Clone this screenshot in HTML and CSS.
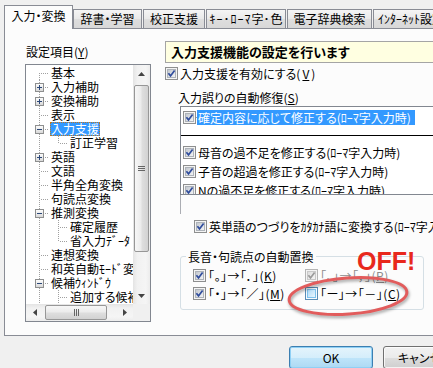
FILE: index.html
```html
<!DOCTYPE html>
<html lang="ja">
<head>
<meta charset="UTF-8">
<meta name="viewport" content="width=device-width, initial-scale=1.0">
<title>入力支援</title>
<link rel="stylesheet" href="styles.css">
</head>
<body>
<svg class="defs" width="0" height="0">
    <defs>
        <linearGradient id="cbFill" x1="0" y1="0" x2="1" y2="1">
            <stop offset="0" stop-color="#c0c5cc"/>
            <stop offset="1" stop-color="#f5f6f7"/>
        </linearGradient>
        <linearGradient id="cbHot" x1="0" y1="0" x2="1" y2="1">
            <stop offset="0" stop-color="#a9d8f6"/>
            <stop offset="1" stop-color="#eef8fe"/>
        </linearGradient>
        <linearGradient id="cbDis" x1="0" y1="0" x2="1" y2="1">
            <stop offset="0" stop-color="#dcdcdc"/>
            <stop offset="1" stop-color="#f6f6f6"/>
        </linearGradient>
        <linearGradient id="expFill" x1="0" y1="0" x2="0" y2="1">
            <stop offset="0" stop-color="#ffffff"/>
            <stop offset="1" stop-color="#d6d6d6"/>
        </linearGradient>
    </defs>
</svg>
<div id="dialog">
    <!-- タブ -->
    <div class="tabs">
        <div class="tab active">入力・変換</div>
        <div class="tab t2">辞書・学習</div>
        <div class="tab t3">校正支援</div>
        <div class="tab t4"><span class="hw">ｷｰ･ﾛｰﾏ</span>字<span class="hw">･</span>色</div>
        <div class="tab t5">電子辞典検索</div>
        <div class="tab t6"><span class="hw">ｲﾝﾀｰﾈｯﾄ</span>設定</div>
    </div>
    <div class="panel">
        <!-- 設定項目ツリー -->
        <div class="leftCol">
            <div class="caption">設定項目(<u>Y</u>)</div>
            <div class="tree">
                <div class="treeBody">
                    <div class="row"><span class="c first"></span><span class="txt">基本</span></div>
                    <div class="row"><span class="c tee"><svg class="exp" viewBox="0 0 9 9"><rect x=".5" y=".5" width="8" height="8" fill="url(#expFill)" stroke="#8e8f8f"/><path d="M2 4.5h5M4.5 2v5" stroke="#2c4878"/></svg></span><span class="txt">入力補助</span></div>
                    <div class="row"><span class="c tee"><svg class="exp" viewBox="0 0 9 9"><rect x=".5" y=".5" width="8" height="8" fill="url(#expFill)" stroke="#8e8f8f"/><path d="M2 4.5h5M4.5 2v5" stroke="#2c4878"/></svg></span><span class="txt">変換補助</span></div>
                    <div class="row"><span class="c tee"></span><span class="txt">表示</span></div>
                    <div class="row"><span class="c tee"><svg class="exp" viewBox="0 0 9 9"><rect x=".5" y=".5" width="8" height="8" fill="url(#expFill)" stroke="#8e8f8f"/><path d="M2 4.5h5" stroke="#2c4878"/></svg></span><span class="txt sel">入力支援</span></div>
                    <div class="row"><span class="c pipe"></span><span class="c elbow"></span><span class="txt">訂正学習</span></div>
                    <div class="row"><span class="c tee"><svg class="exp" viewBox="0 0 9 9"><rect x=".5" y=".5" width="8" height="8" fill="url(#expFill)" stroke="#8e8f8f"/><path d="M2 4.5h5M4.5 2v5" stroke="#2c4878"/></svg></span><span class="txt">英語</span></div>
                    <div class="row"><span class="c tee"></span><span class="txt">文語</span></div>
                    <div class="row"><span class="c tee"></span><span class="txt">半角全角変換</span></div>
                    <div class="row"><span class="c tee"></span><span class="txt">句読点変換</span></div>
                    <div class="row"><span class="c tee"><svg class="exp" viewBox="0 0 9 9"><rect x=".5" y=".5" width="8" height="8" fill="url(#expFill)" stroke="#8e8f8f"/><path d="M2 4.5h5" stroke="#2c4878"/></svg></span><span class="txt">推測変換</span></div>
                    <div class="row"><span class="c pipe"></span><span class="c tee"></span><span class="txt">確定履歴</span></div>
                    <div class="row"><span class="c pipe"></span><span class="c elbow"></span><span class="txt">省入力<span class="hw">ﾃﾞｰﾀ</span></span></div>
                    <div class="row"><span class="c tee"></span><span class="txt">連想変換</span></div>
                    <div class="row"><span class="c tee"></span><span class="txt">和英自動<span class="hw">ﾓｰﾄﾞ</span>変換</span></div>
                    <div class="row"><span class="c tee"><svg class="exp" viewBox="0 0 9 9"><rect x=".5" y=".5" width="8" height="8" fill="url(#expFill)" stroke="#8e8f8f"/><path d="M2 4.5h5" stroke="#2c4878"/></svg></span><span class="txt">候補<span class="hw">ｳｨﾝﾄﾞｳ</span></span></div>
                    <div class="row"><span class="c pipe"></span><span class="c tee"></span><span class="txt">追加する候補</span></div>
                </div>
                <div class="vscroll">
                    <div class="sbtn"><svg width="7" height="4" viewBox="0 0 7 4"><path d="M3.5 0L7 4H0z" fill="#444"/></svg></div>
                    <div class="vthumb"><svg width="7" height="5" viewBox="0 0 7 5"><path d="M0 .5h7M0 2.5h7M0 4.5h7" stroke="#666"/></svg></div>
                    <div class="spacer"></div>
                    <div class="sbtn"><svg width="7" height="4" viewBox="0 0 7 4"><path d="M0 0h7L3.5 4z" fill="#444"/></svg></div>
                </div>
                <div class="hscroll">
                    <div class="sbtn"><svg width="4" height="7" viewBox="0 0 4 7"><path d="M0 3.5L4 0v7z" fill="#444"/></svg></div>
                    <div class="hthumb"><svg width="5" height="7" viewBox="0 0 5 7"><path d="M.5 0v7M2.5 0v7M4.5 0v7" stroke="#666"/></svg></div>
                    <div class="spacer"></div>
                    <div class="sbtn"><svg width="4" height="7" viewBox="0 0 4 7"><path d="M0 0l4 3.5L0 7z" fill="#444"/></svg></div>
                </div>
                <div class="corner"></div>
            </div>
        </div>
        <!-- 入力支援の設定 -->
        <div class="rightCol">
            <div class="header">入力支援機能の設定を行います</div>
            <label class="chk main"><svg class="cb" viewBox="0 0 13 13"><rect x=".5" y=".5" width="12" height="12" fill="#f4f4f4" stroke="#8e8f8f"/><rect x="2.5" y="2.5" width="8" height="8" fill="url(#cbFill)" stroke="#aeb3b9"/><path d="M3.4 6.3l2.1 2.6 4.1-5.5" fill="none" stroke="#2f4c9c" stroke-width="1.7"/></svg>入力支援を有効にする(<u>V</u>)</label>
            <div class="sub">入力誤りの自動修復(<u>S</u>)</div>
            <div class="list">
                <div class="item first"><svg class="cb" viewBox="0 0 13 13"><rect x=".5" y=".5" width="12" height="12" fill="#f4f4f4" stroke="#8e8f8f"/><rect x="2.5" y="2.5" width="8" height="8" fill="url(#cbFill)" stroke="#aeb3b9"/><path d="M3.4 6.3l2.1 2.6 4.1-5.5" fill="none" stroke="#2f4c9c" stroke-width="1.7"/></svg><span class="hl">確定内容に応じて修正する(ﾛｰﾏ字入力時)</span></div>
                <div class="sep"></div>
                <div class="item"><svg class="cb" viewBox="0 0 13 13"><rect x=".5" y=".5" width="12" height="12" fill="#f4f4f4" stroke="#8e8f8f"/><rect x="2.5" y="2.5" width="8" height="8" fill="url(#cbFill)" stroke="#aeb3b9"/><path d="M3.4 6.3l2.1 2.6 4.1-5.5" fill="none" stroke="#2f4c9c" stroke-width="1.7"/></svg><span class="itxt">母音の過不足を修正する(ﾛｰﾏ字入力時)</span></div>
                <div class="item"><svg class="cb" viewBox="0 0 13 13"><rect x=".5" y=".5" width="12" height="12" fill="#f4f4f4" stroke="#8e8f8f"/><rect x="2.5" y="2.5" width="8" height="8" fill="url(#cbFill)" stroke="#aeb3b9"/><path d="M3.4 6.3l2.1 2.6 4.1-5.5" fill="none" stroke="#2f4c9c" stroke-width="1.7"/></svg><span class="itxt">子音の超過を修正する(ﾛｰﾏ字入力時)</span></div>
                <div class="item"><svg class="cb" viewBox="0 0 13 13"><rect x=".5" y=".5" width="12" height="12" fill="#f4f4f4" stroke="#8e8f8f"/><rect x="2.5" y="2.5" width="8" height="8" fill="url(#cbFill)" stroke="#aeb3b9"/><path d="M3.4 6.3l2.1 2.6 4.1-5.5" fill="none" stroke="#2f4c9c" stroke-width="1.7"/></svg><span class="itxt">Nの過不足を修正する(ﾛｰﾏ字入力時)</span></div>
            </div>
            <div class="desc"></div>
            <label class="chk eng"><svg class="cb" viewBox="0 0 13 13"><rect x=".5" y=".5" width="12" height="12" fill="#f4f4f4" stroke="#8e8f8f"/><rect x="2.5" y="2.5" width="8" height="8" fill="url(#cbFill)" stroke="#aeb3b9"/><path d="M3.4 6.3l2.1 2.6 4.1-5.5" fill="none" stroke="#2f4c9c" stroke-width="1.7"/></svg>英単語のつづりをｶﾀｶﾅ語に変換する(ﾛｰﾏ字入力時)</label>
            <div class="group">
                <div class="legend">長音・句読点の自動置換</div>
                <div class="grid">
                    <label class="chk"><svg class="cb" viewBox="0 0 13 13"><rect x=".5" y=".5" width="12" height="12" fill="#f4f4f4" stroke="#8e8f8f"/><rect x="2.5" y="2.5" width="8" height="8" fill="url(#cbFill)" stroke="#aeb3b9"/><path d="M3.4 6.3l2.1 2.6 4.1-5.5" fill="none" stroke="#2f4c9c" stroke-width="1.7"/></svg><span class="gt">「。」→「．」(<u>K</u>)</span></label>
                    <label class="chk dis"><svg class="cb" viewBox="0 0 13 13"><rect x=".5" y=".5" width="12" height="12" fill="#f4f4f4" stroke="#b5b5b5"/><rect x="2.5" y="2.5" width="8" height="8" fill="url(#cbDis)" stroke="#c9c9c9"/><path d="M3.4 6.3l2.1 2.6 4.1-5.5" fill="none" stroke="#9a9a9a" stroke-width="1.7"/></svg><span class="gt">「、」→「，」(<u>P</u>)</span></label>
                    <label class="chk"><svg class="cb" viewBox="0 0 13 13"><rect x=".5" y=".5" width="12" height="12" fill="#f4f4f4" stroke="#8e8f8f"/><rect x="2.5" y="2.5" width="8" height="8" fill="url(#cbFill)" stroke="#aeb3b9"/><path d="M3.4 6.3l2.1 2.6 4.1-5.5" fill="none" stroke="#2f4c9c" stroke-width="1.7"/></svg><span class="gt">「・」→「／」(<u>M</u>)</span></label>
                    <label class="chk"><svg class="cb" viewBox="0 0 13 13"><rect x=".5" y=".5" width="12" height="12" fill="#f7fbfe" stroke="#5a8db5"/><rect x="2.5" y="2.5" width="8" height="8" fill="url(#cbHot)" stroke="#7cc2ee"/></svg><span class="gt">「ー」→「－」(<u>C</u>)</span></label>
                </div>
            </div>
        </div>
    </div>
    <div class="buttons">
        <button class="btn def">OK</button>
        <button class="btn">キャンセル</button>
    </div>
    <!-- 注釈 -->
    <div class="off">OFF!</div>
    <svg class="ring" width="136" height="50" viewBox="0 0 136 50"><ellipse cx="66" cy="24" rx="59" ry="18" transform="rotate(-4 66 24)" fill="none" stroke="#e25c5c" stroke-width="3"/></svg>
</div>
</body>
</html>
```

FILE: styles.css
```css
body{
    margin: 0;
    background-color: #f0f0f0;
    font-family: "Noto Sans CJK JP", "Noto Sans", sans-serif;
    font-size: 12px;
    font-feature-settings: "palt";
    color: #000;
    overflow: hidden;
}
.defs{
    position: absolute;
}
#dialog{
    width: 433px;
    height: 368px;
    overflow: hidden;
    position: relative;
}
u{
    text-decoration: underline;
}
/* 半角カナは等幅のまま */
.hw{
    font-feature-settings: normal;
}

/* タブ */
.tabs{
    display: flex;
    align-items: flex-end;
    height: 28px;
    padding-left: 4px;
}
.tab{
    flex: none;
    box-sizing: border-box;
    height: 19px;
    padding-top: 1px;
    line-height: 16px;
    text-align: center;
    white-space: nowrap;
    overflow: hidden;
    border: 1px solid #898c95;
    border-bottom: none;
    background: linear-gradient(#f5f5f5, #e9e9e9 50%, #dedede 51%, #d8d8d8);
    margin-left: 1px;
}
.tab.active{
    width: 69px;
    height: 24px;
    padding-top: 2px;
    margin: 0 0 -1px 0;
    background: #fcfcfc;
    position: relative;
    z-index: 1;
}
.tab.t2{ width: 69px; margin-left: 0; }
.tab.t3{ width: 62px; }
.tab.t4{ width: 80px; }
.tab.t4 .hw{ letter-spacing: 1px; }
.tab.t5{ width: 85px; }
.tab.t6{ width: 84px; text-align: left; padding-left: 4px; }

.panel{
    display: flex;
    box-sizing: border-box;
    width: 520px;
    height: 308px;
    margin-left: 4px;
    border: 1px solid #898c95;
    background-color: #fcfcfc;
}

/* 左：ツリー */
.leftCol{
    flex: none;
    width: 160px;
    box-sizing: border-box;
    padding-left: 20px;
}
.caption{
    margin-top: 16px;
    line-height: 14px;
    padding-left: 1px;
}
.tree{
    margin-top: 5px;
    width: 126px;
    height: 258px;
    box-sizing: border-box;
    border: 1px solid #828790;
    background-color: #fff;
    display: grid;
    grid-template-columns: 107px 17px;
    grid-template-rows: 239px 17px;
}
.treeBody{
    overflow: hidden;
    padding: 1px 0 0 4px;
}
.row{
    display: flex;
    height: 14px;
}
.c{
    flex: none;
    width: 19px;
    height: 14px;
}
.tee{
    background:
        repeating-linear-gradient(to bottom, #a0a0a0 0 1px, transparent 1px 2px) 9px 0 / 1px 14px no-repeat,
        repeating-linear-gradient(to right, #a0a0a0 0 1px, transparent 1px 2px) 11px 7px / 8px 1px no-repeat;
}
.first{
    background:
        repeating-linear-gradient(to bottom, #a0a0a0 0 1px, transparent 1px 2px) 9px 7px / 1px 7px no-repeat,
        repeating-linear-gradient(to right, #a0a0a0 0 1px, transparent 1px 2px) 11px 7px / 8px 1px no-repeat;
}
.elbow{
    background:
        repeating-linear-gradient(to bottom, #a0a0a0 0 1px, transparent 1px 2px) 9px 0 / 1px 8px no-repeat,
        repeating-linear-gradient(to right, #a0a0a0 0 1px, transparent 1px 2px) 11px 7px / 8px 1px no-repeat;
}
.pipe{
    background: repeating-linear-gradient(to bottom, #a0a0a0 0 1px, transparent 1px 2px) 9px 0 / 1px 14px no-repeat;
}
.exp{
    display: block;
    width: 9px;
    height: 9px;
    margin: 3px 0 0 5px;
}
.txt{
    margin-left: 1px;
    padding: 0 1px;
    line-height: 14px;
    white-space: nowrap;
}
.txt.sel{
    background-color: #3399ff;
    color: #fff;
    outline: 1px dotted #c07820;
    outline-offset: -1px;
}
.vscroll{
    display: flex;
    flex-direction: column;
    background: linear-gradient(90deg, #e4e4e4, #f1f1f1 25%, #f5f5f5 75%, #ececec);
}
.hscroll{
    display: flex;
    background: linear-gradient(#e4e4e4, #f1f1f1 25%, #f5f5f5 75%, #ececec);
}
.corner{
    background-color: #f0f0f0;
}
.sbtn{
    flex: none;
    width: 17px;
    height: 17px;
    display: flex;
    align-items: center;
    justify-content: center;
}
.spacer{
    flex: 1;
}
.vthumb{
    flex: none;
    height: 167px;
    margin: 3px 1px 0;
    box-sizing: border-box;
    border: 1px solid #979797;
    border-radius: 2px;
    background: linear-gradient(90deg, #f7f7f7, #ececec 45%, #dedede 55%, #d2d2d2);
    display: flex;
    align-items: center;
    justify-content: center;
}
.hthumb{
    flex: none;
    width: 62px;
    margin: 1px 0 1px 2px;
    box-sizing: border-box;
    border: 1px solid #979797;
    border-radius: 2px;
    background: linear-gradient(#f7f7f7, #ececec 45%, #dedede 55%, #d2d2d2);
    display: flex;
    align-items: center;
    justify-content: center;
}

/* 右：設定 */
.rightCol{
    flex: none;
    width: 350px;
    padding-top: 12px;
}
.header{
    box-sizing: border-box;
    height: 22px;
    border: 1px solid #a5a5a5;
    border-right: none;
    background-color: #ffffe1;
    font-weight: bold;
    font-size: 13px;
    line-height: 20px;
    padding-left: 5px;
    white-space: nowrap;
}
.chk{
    display: flex;
    align-items: center;
    gap: 2px;
    height: 15px;
    line-height: 15px;
    white-space: nowrap;
}
.cb{
    flex: none;
    display: block;
    width: 13px;
    height: 13px;
}
.chk.main{
    margin-top: 3px;
}
.sub{
    margin: 9px 0 0 13px;
    line-height: 15px;
}
.list{
    margin: 1px 0 0 15px;
    box-sizing: border-box;
    height: 89px;
    border: 1px solid #828790;
    border-right: none;
    background-color: #fff;
    padding-top: 3px;
    overflow: hidden;
}
.item{
    display: flex;
    align-items: center;
    height: 19px;
    padding-left: 2px;
    white-space: nowrap;
}
.item.first{
    height: 15px;
}
.item .cb{
    margin-right: 1px;
}
.hl{
    background-color: #3399ff;
    color: #fff;
    line-height: 15px;
    padding: 0 1px;
    width: 216px;
}
.itxt{
    padding-left: 1px;
}
.sep{
    height: 1px;
    background-color: #000;
    margin: 10px 0 7px;
}
.desc{
    margin-left: 15px;
    height: 19px;
    border-left: 1px solid #abadb3;
}
.chk.eng{
    margin: 5px 0 0 29px;
}
.group{
    margin: 22px 0 0 15px;
    width: 244px;
    height: 54px;
    box-sizing: border-box;
    border: 1px solid #d5dfe5;
    border-radius: 3px;
}
.legend{
    width: fit-content;
    margin: -8px 0 0 5px;
    padding: 0 2px;
    line-height: 15px;
    background-color: #fcfcfc;
}
.grid{
    display: grid;
    grid-template-columns: 112px auto;
    row-gap: 3px;
    margin-top: 4px;
    padding-left: 12px;
}
.gt{
    letter-spacing: 0.5px;
}
.chk.dis{
    color: #8d8d8d;
}

/* ボタン */
.buttons{
    display: flex;
    gap: 10px;
    padding-left: 289px;
    margin-top: 10px;
}
.btn{
    flex: none;
    width: 84px;
    height: 23px;
    box-sizing: border-box;
    padding: 0;
    border: 1px solid #707070;
    border-radius: 3px;
    background: linear-gradient(#f2f2f2, #ebebeb 50%, #dddddd 51%, #cfcfcf);
    box-shadow: inset 0 0 0 1px rgba(255, 255, 255, .75);
    font-family: "Noto Sans CJK JP", sans-serif;
    font-size: 12px;
    font-feature-settings: "palt";
    color: #000;
}
.btn.def{
    border-color: #3c7fb1;
    background: linear-gradient(#e5f4fc, #d5eefb 50%, #bfe5fa 51%, #add9f3);
    box-shadow: inset 0 0 0 1px #8fd0f5;
}

/* 注釈 */
.off{
    position: absolute;
    left: 357px;
    top: 249px;
    font-family: "Liberation Sans", Arial, sans-serif;
    font-weight: bold;
    font-size: 25px;
    line-height: 25px;
    color: #e8281c;
}
.ring{
    position: absolute;
    left: 282px;
    top: 272px;
    filter: drop-shadow(1px 2px 1.5px rgba(0, 0, 0, .35));
}
```
